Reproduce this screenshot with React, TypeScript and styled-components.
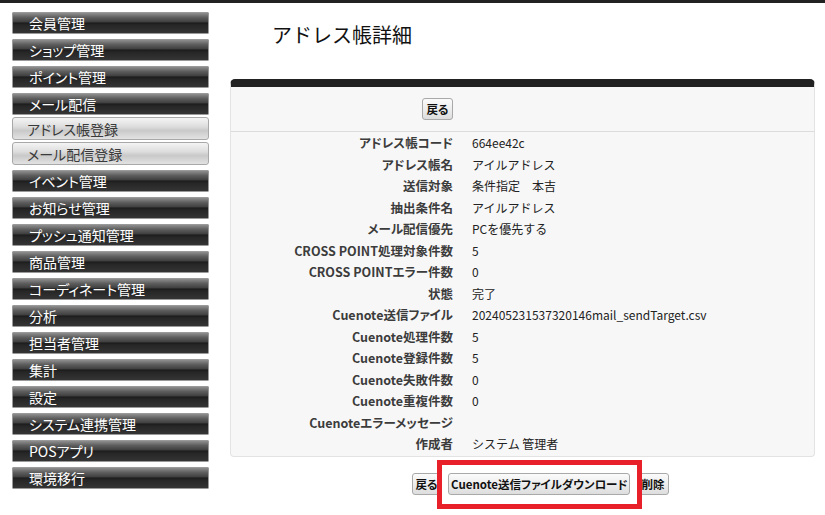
import React from "react";
import styled, { createGlobalStyle, css } from "styled-components";

const GlobalStyle = createGlobalStyle`
  html, body {
    margin: 0;
    padding: 0;
    background: #ffffff;
  }
  body {
    font-family: "Noto Sans CJK JP", "Noto Sans", "Liberation Sans", sans-serif;
    color: #222222;
  }
`;

const Page = styled.div`
  width: 825px;
  height: 515px;
  border-top: 3px solid #222222;
  box-sizing: border-box;
  display: flex;
  overflow: hidden;
`;

const Sidebar = styled.nav`
  width: 215px;
  flex-shrink: 0;
  padding: 9px 0 0 12px;
  box-sizing: border-box;
  display: flex;
  flex-direction: column;
`;

const MenuItem = styled.div<{ $sub?: boolean }>`
  width: 197px;
  box-sizing: border-box;
  display: flex;
  align-items: center;
  font-size: 14px;
  font-feature-settings: "palt";
  white-space: nowrap;
  ${(p) =>
    p.$sub
      ? css`
          height: 23px;
          margin-top: 2px;
          padding-left: 14px;
          color: #3a3a3a;
          border: 1px solid #a8a8a8;
          border-radius: 3px;
          background: linear-gradient(
            to bottom,
            #f4f4f4 0%,
            #dedede 40%,
            #c9c9c9 60%,
            #e2e2e2 100%
          );
        `
      : css`
          height: 22px;
          margin-top: 5px;
          padding-left: 16px;
          color: #ffffff;
          border: 1px solid #9a9a9a;
          border-radius: 1px;
          background: linear-gradient(
            to bottom,
            #8e8e8e 0%,
            #5e5e5e 22%,
            #404040 44%,
            #1c1c1c 50%,
            #262626 60%,
            #343434 100%
          );
        `}
  &:first-child {
    margin-top: 0;
  }
`;

const Main = styled.main`
  flex: 1;
  padding-left: 15px;
  display: flex;
  flex-direction: column;
`;

const Title = styled.h1`
  margin: 17px 0 0 42px;
  height: 30px;
  line-height: 30px;
  font-size: 20px;
  font-weight: normal;
  color: #111111;
`;

const Panel = styled.section`
  margin-top: 29px;
  width: 585px;
  box-sizing: border-box;
  background: #f7f7f7;
  border: 1px solid #e3e3e3;
  border-top: 8px solid #222222;
  border-radius: 5px 5px 4px 4px;
  padding-bottom: 1px;
`;

const TopRow = styled.div`
  height: 44px;
  border-bottom: 1px solid #dcdcdc;
  display: grid;
  grid-template-columns: 222px 1fr;
  align-items: center;
`;

const TopCell = styled.div`
  display: flex;
  justify-content: flex-end;
`;

const DetailGrid = styled.dl`
  margin: 0;
  display: grid;
  grid-template-columns: 222px 1fr;
  column-gap: 19px;
  grid-auto-rows: 21.5px;
  align-items: center;
`;

const Label = styled.dt`
  text-align: right;
  font-size: 12.5px;
  font-weight: bold;
  color: #3c3c3c;
  font-feature-settings: "palt";
  white-space: nowrap;
`;

const Value = styled.dd`
  margin: 0;
  font-size: 12px;
  color: #222222;
  white-space: nowrap;
`;

const Button = styled.button<{ $width?: number }>`
  height: 22px;
  padding: 0 2px;
  box-sizing: border-box;
  font-family: "Noto Sans CJK JP", "Noto Sans", "Liberation Sans", sans-serif;
  font-size: 11.5px;
  font-weight: bold;
  color: #111111;
  font-feature-settings: "palt";
  white-space: nowrap;
  border: 1px solid #a9a9a9;
  border-radius: 3px;
  background: linear-gradient(to bottom, #fbfbfb 0%, #ececec 55%, #dddddd 100%);
  ${(p) => p.$width && `width: ${p.$width}px;`}
  cursor: pointer;
`;

const ActionRow = styled.div`
  position: relative;
  margin-top: 16px;
  padding-left: 182px;
  display: flex;
  gap: 7px;
`;

const Highlight = styled.div`
  position: absolute;
  left: 207px;
  top: -13px;
  width: 205px;
  height: 49px;
  box-sizing: border-box;
  border: 5px solid #e8202a;
  pointer-events: none;
`;

const menu: { label: string; sub?: boolean }[] = [
  { label: "会員管理" },
  { label: "ショップ管理" },
  { label: "ポイント管理" },
  { label: "メール配信" },
  { label: "アドレス帳登録", sub: true },
  { label: "メール配信登録", sub: true },
  { label: "イベント管理" },
  { label: "お知らせ管理" },
  { label: "プッシュ通知管理" },
  { label: "商品管理" },
  { label: "コーディネート管理" },
  { label: "分析" },
  { label: "担当者管理" },
  { label: "集計" },
  { label: "設定" },
  { label: "システム連携管理" },
  { label: "POSアプリ" },
  { label: "環境移行" },
];

const details: [string, string][] = [
  ["アドレス帳コード", "664ee42c"],
  ["アドレス帳名", "アイルアドレス"],
  ["送信対象", "条件指定\u3000本吉"],
  ["抽出条件名", "アイルアドレス"],
  ["メール配信優先", "PCを優先する"],
  ["CROSS POINT処理対象件数", "5"],
  ["CROSS POINTエラー件数", "0"],
  ["状態", "完了"],
  ["Cuenote送信ファイル", "202405231537320146mail_sendTarget.csv"],
  ["Cuenote処理件数", "5"],
  ["Cuenote登録件数", "5"],
  ["Cuenote失敗件数", "0"],
  ["Cuenote重複件数", "0"],
  ["Cuenoteエラーメッセージ", ""],
  ["作成者", "システム 管理者"],
];

export default function App() {
  return (
    <>
      <GlobalStyle />
      <Page>
        <Sidebar>
          {menu.map((m) => (
            <MenuItem key={m.label} $sub={m.sub}>
              {m.label}
            </MenuItem>
          ))}
        </Sidebar>
        <Main>
          <Title>アドレス帳詳細</Title>
          <Panel>
            <TopRow>
              <TopCell>
                <Button $width={31}>戻る</Button>
              </TopCell>
            </TopRow>
            <DetailGrid>
              {details.map(([k, v]) => (
                <React.Fragment key={k}>
                  <Label>{k}</Label>
                  <Value>{v}</Value>
                </React.Fragment>
              ))}
            </DetailGrid>
          </Panel>
          <ActionRow>
            <Button $width={29}>戻る</Button>
            <Button $width={182}>Cuenote送信ファイルダウンロード</Button>
            <Button $width={32}>削除</Button>
            <Highlight />
          </ActionRow>
        </Main>
      </Page>
    </>
  );
}
